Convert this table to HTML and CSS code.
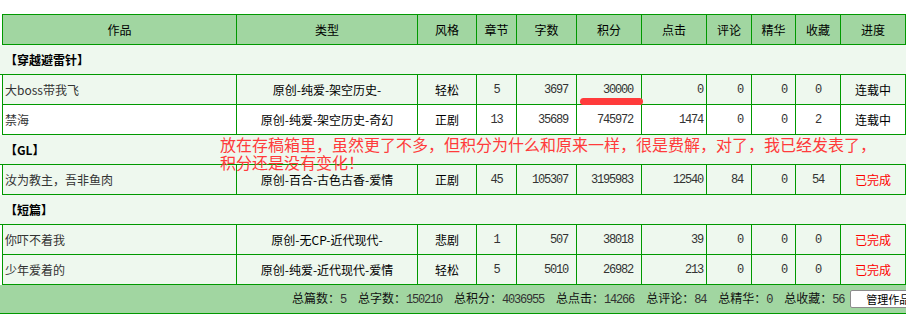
FILE: index.html
```html
<!DOCTYPE html>
<html lang="zh-CN">
<head>
<meta charset="utf-8">
<title>作品管理</title>
<link rel="stylesheet" href="styles.css">
</head>
<body>
<div class="sheet">
  <div class="row head">
    <div class="c">作品</div>
    <div class="c">类型</div>
    <div class="c">风格</div>
    <div class="c">章节</div>
    <div class="c">字数</div>
    <div class="c">积分</div>
    <div class="c">点击</div>
    <div class="c">评论</div>
    <div class="c">精华</div>
    <div class="c">收藏</div>
    <div class="c">进度</div>
  </div>

  <div class="section">【穿越避雷针】</div>
  <div class="row tint">
    <div class="c name">大boss带我飞</div>
    <div class="c">原创-纯爱-架空历史-</div>
    <div class="c">轻松</div>
    <div class="c num">5</div>
    <div class="c num r8">3697</div>
    <div class="c num r8">30000</div>
    <div class="c num r2">0</div>
    <div class="c num r8">0</div>
    <div class="c num r8">0</div>
    <div class="c num">0</div>
    <div class="c">连载中</div>
  </div>
  <div class="row">
    <div class="c name">禁海</div>
    <div class="c">原创-纯爱-架空历史-奇幻</div>
    <div class="c">正剧</div>
    <div class="c num">13</div>
    <div class="c num r8">35689</div>
    <div class="c num r8">745972</div>
    <div class="c num r2">1474</div>
    <div class="c num r8">0</div>
    <div class="c num r8">0</div>
    <div class="c num">2</div>
    <div class="c">连载中</div>
  </div>

  <div class="section">【GL】</div>
  <div class="row tint">
    <div class="c name">汝为教主，吾非鱼肉</div>
    <div class="c">原创-百合-古色古香-爱情</div>
    <div class="c">正剧</div>
    <div class="c num">45</div>
    <div class="c num r8">105307</div>
    <div class="c num r8">3195983</div>
    <div class="c num r2">12540</div>
    <div class="c num r8">84</div>
    <div class="c num r8">0</div>
    <div class="c num">54</div>
    <div class="c done">已完成</div>
  </div>

  <div class="section">【短篇】</div>
  <div class="row tint">
    <div class="c name">你吓不着我</div>
    <div class="c">原创-无CP-近代现代-</div>
    <div class="c">悲剧</div>
    <div class="c num">1</div>
    <div class="c num r8">507</div>
    <div class="c num r8">38018</div>
    <div class="c num r2">39</div>
    <div class="c num r8">0</div>
    <div class="c num r8">0</div>
    <div class="c num">0</div>
    <div class="c done">已完成</div>
  </div>
  <div class="row tint">
    <div class="c name">少年爱着的</div>
    <div class="c">原创-纯爱-近代现代-爱情</div>
    <div class="c">轻松</div>
    <div class="c num">5</div>
    <div class="c num r8">5010</div>
    <div class="c num r8">26982</div>
    <div class="c num r2">213</div>
    <div class="c num r8">0</div>
    <div class="c num r8">0</div>
    <div class="c num">0</div>
    <div class="c done">已完成</div>
  </div>

  <div class="footer">
    <span class="stat">总篇数：<b>5</b></span>
    <span class="stat">总字数：<b>150210</b></span>
    <span class="stat">总积分：<b>4036955</b></span>
    <span class="stat">总点击：<b>14266</b></span>
    <span class="stat">总评论：<b>84</b></span>
    <span class="stat">总精华：<b>0</b></span>
    <span class="stat">总收藏：<b>56</b></span>
    <button class="manage" type="button">管理作品</button>
  </div>

  <div class="mark"></div>
  <div class="note">放在存稿箱里，虽然更了不多，但积分为什么和原来一样，很是费解，对了，我已经发表了，<br>积分还是没有变化！</div>
</div>
</body>
</html>
```

FILE: styles.css
```css
html, body {
  margin: 0;
  padding: 0;
  background: #ffffff;
  overflow: hidden;
}

.sheet {
  position: relative;
  width: 906px;
  padding-top: 14px;
  font-family: "Noto Sans CJK SC", "Liberation Sans", sans-serif;
  font-size: 12px;
  color: #000;
}

.row {
  display: grid;
  grid-template-columns: 234px 181px 59px 40px 60px 65px 65px 45px 44px 45px 65px;
  width: 904px;
  height: 30px;
  margin-left: 2px;
  box-sizing: border-box;
  border-left: 1px solid #009900;
  border-bottom: 1px solid #009900;
  background: #ffffff;
}

.row.head {
  height: 31px;
  border-top: 1px solid #009900;
  background: #a1d6a1;
}

.row.tint {
  background: #eef8ee;
}

.c {
  display: flex;
  align-items: center;
  justify-content: center;
  box-sizing: border-box;
  border-right: 1px solid #009900;
  white-space: nowrap;
  overflow: hidden;
  line-height: 1;
}

.c.name {
  justify-content: flex-start;
  padding-left: 2px;
  color: #333;
}

.c.num {
  font-family: "Liberation Mono", "DejaVu Sans Mono", monospace;
  font-size: 12px;
  letter-spacing: -1.2px;
  color: #333;
}

.c.r8 {
  justify-content: flex-end;
  padding-right: 8px;
}

.c.r2 {
  justify-content: flex-end;
  padding-right: 3px;
}

.c.done {
  color: #ff0000;
}

.section {
  height: 30px;
  width: 906px;
  box-sizing: border-box;
  border-bottom: 1px solid #009900;
  background: #eef8ee;
  display: flex;
  align-items: center;
  padding-left: 5px;
  font-weight: bold;
  line-height: 1;
}

.footer {
  display: flex;
  align-items: center;
  width: 906px;
  height: 29px;
  box-sizing: border-box;
  border-bottom: 1px solid #009900;
  background: #a1d6a1;
  padding-left: 292px;
  white-space: nowrap;
  overflow: hidden;
  line-height: 1;
}

.stat {
  margin-right: 12px;
  color: #111;
}

.stat b {
  font-weight: normal;
  font-family: "Liberation Mono", "DejaVu Sans Mono", monospace;
  font-size: 12px;
  letter-spacing: -1.2px;
  color: #333;
}

.manage {
  flex: none;
  margin-left: -6px;
  width: 72px;
  height: 18px;
  padding: 0 0 0 15px;
  text-align: left;
  background: #ffffff;
  border: 1px solid #8c8c8c;
  border-radius: 2px;
  font-family: "Noto Sans CJK SC", sans-serif;
  font-size: 11px;
  line-height: 16px;
  color: #000;
}

.mark {
  position: absolute;
  left: 580px;
  top: 98px;
  width: 63px;
  height: 7px;
  border-radius: 4px;
  background: #ff3b3b;
}

.note {
  position: absolute;
  left: 220px;
  top: 135px;
  font-family: "Noto Sans CJK SC", sans-serif;
  font-size: 16px;
  line-height: 18px;
  color: #ff3b3b;
  white-space: nowrap;
}
```
